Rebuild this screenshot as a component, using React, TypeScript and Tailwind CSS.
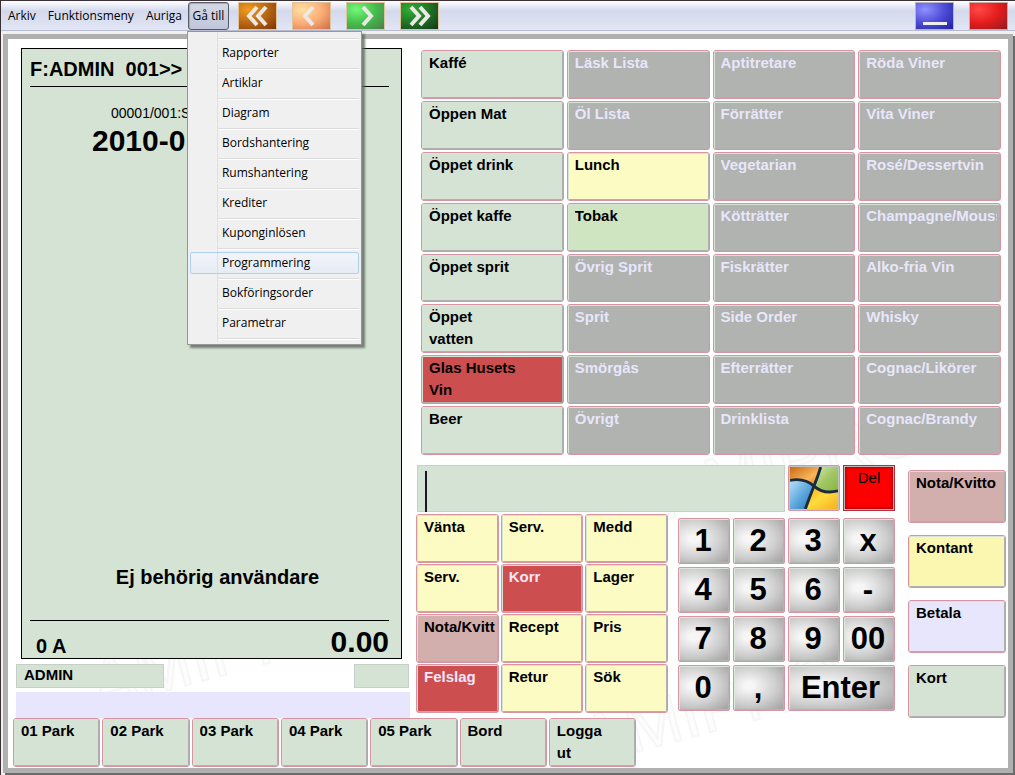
type Tone = "green" | "gray" | "yellow" | "straw" | "lime" | "red" | "redLight" | "rose" | "lavender";

const tones: Record<Tone, string> = {
  green: "bg-[#d5e3d5] text-black",
  gray: "bg-[#b0b3b0] text-[#e8e6fb]",
  yellow: "bg-[#fdfbc4] text-black",
  straw: "bg-[#fbf7b0] text-black",
  lime: "bg-[#cfe5c2] text-black",
  red: "bg-[#cc4e4e] text-black",
  redLight: "bg-[#cc4e4e] text-[#f6e6fb]",
  rose: "bg-[#d2aead] text-black",
  lavender: "bg-[#e8e6fd] text-black",
};

const products: [string, Tone][] = [
  ["Kaffé", "green"], ["Läsk Lista", "gray"], ["Aptitretare", "gray"], ["Röda Viner", "gray"],
  ["Öppen Mat", "green"], ["Öl Lista", "gray"], ["Förrätter", "gray"], ["Vita Viner", "gray"],
  ["Öppet drink", "green"], ["Lunch", "yellow"], ["Vegetarian", "gray"], ["Rosé/Dessertvin", "gray"],
  ["Öppet kaffe", "green"], ["Tobak", "lime"], ["Kötträtter", "gray"], ["Champagne/Mouss", "gray"],
  ["Öppet sprit", "green"], ["Övrig Sprit", "gray"], ["Fiskrätter", "gray"], ["Alko-fria Vin", "gray"],
  ["Öppet\nvatten", "green"], ["Sprit", "gray"], ["Side Order", "gray"], ["Whisky", "gray"],
  ["Glas Husets\nVin", "red"], ["Smörgås", "gray"], ["Efterrätter", "gray"], ["Cognac/Likörer", "gray"],
  ["Beer", "green"], ["Övrigt", "gray"], ["Drinklista", "gray"], ["Cognac/Brandy", "gray"],
];

const functions: [string, Tone][] = [
  ["Vänta", "yellow"], ["Serv.", "yellow"], ["Medd", "yellow"],
  ["Serv.", "yellow"], ["Korr", "redLight"], ["Lager", "yellow"],
  ["Nota/Kvitt", "rose"], ["Recept", "yellow"], ["Pris", "yellow"],
  ["Felslag", "redLight"], ["Retur", "yellow"], ["Sök", "yellow"],
];

const payments: [string, Tone][] = [
  ["Nota/Kvitto", "rose"], ["Kontant", "straw"], ["Betala", "lavender"], ["Kort", "green"],
];

const parking = ["01 Park", "02 Park", "03 Park", "04 Park", "05 Park", "Bord", "Logga\nut"];
const digits = ["1", "2", "3", "x", "4", "5", "6", "-", "7", "8", "9", "00", "0", ","];
const menuItems = [
  "Rapporter", "Artiklar", "Diagram", "Bordshantering", "Rumshantering",
  "Krediter", "Kuponginlösen", "Programmering", "Bokföringsorder", "Parametrar",
];

const watermarks = [
  [90, 670], [580, 726], [660, 480],
];

function Key({ label, tone, className = "" }: { label: string; tone: Tone; className?: string }) {
  return (
    <button
      type="button"
      className={`min-w-0 rounded-[3px] border border-[#d794a2] text-left ${tones[tone]} ${className}`}
    >
      <span className="block h-full rounded-[2px] border border-t-[#d8e2d6] border-r-[#b0b0b0] border-b-[#b0b0b0] border-l-[#d8e2d6] pr-0.5 pl-1.5">
        <span className="block overflow-hidden text-[15px] leading-[22px] font-bold whitespace-pre">{label}</span>
      </span>
    </button>
  );
}

function NumKey({ label, className = "" }: { label: string; className?: string }) {
  return (
    <button
      type="button"
      className={`rounded-[2px] border border-[#d794a2] bg-radial-[at_30%_45%] from-[#f6f6f6] from-10% via-[#cecece] via-55% to-[#9c9c9c] pr-0.5 text-[31px] leading-[42px] font-bold text-black shadow-[inset_1px_1px_0_#dde5dc,inset_-1px_-1px_0_#b4b4b4] ${className}`}
    >
      {label}
    </button>
  );
}

function Chevron({ d }: { d: string }) {
  return (
    <svg viewBox="0 0 37 26" className="h-[26px] w-[37px]" fill="none" stroke="#ebe8e6" strokeWidth="4" aria-hidden="true">
      <path d={d} />
    </svg>
  );
}

function WindowsLogo() {
  return (
    <svg viewBox="0 0 50 44" preserveAspectRatio="none" className="block h-full w-full" aria-hidden="true">
      <defs>
        <linearGradient id="wr" x1="0" y1="0" x2="1" y2="1"><stop offset="0" stopColor="#c96a14" /><stop offset=".6" stopColor="#f9b65a" /><stop offset="1" stopColor="#e0692a" /></linearGradient>
        <linearGradient id="wg" x1="0" y1="0" x2="1" y2="1"><stop offset="0" stopColor="#d5e5b0" /><stop offset=".5" stopColor="#a3c768" /><stop offset="1" stopColor="#86b63e" /></linearGradient>
        <linearGradient id="wb" x1="0" y1="0" x2="1" y2="1"><stop offset="0" stopColor="#b9e1f8" /><stop offset=".5" stopColor="#5fa9de" /><stop offset="1" stopColor="#2470b6" /></linearGradient>
        <linearGradient id="wy" x1="0" y1="0" x2="1" y2="1"><stop offset="0" stopColor="#f3a71e" /><stop offset=".5" stopColor="#fedc3d" /><stop offset="1" stopColor="#f5ae21" /></linearGradient>
      </defs>
      <path d="M0 0H32Q28 10 25 20Q15 11 0 15Z" fill="url(#wr)" />
      <path d="M32 0H50V25Q37 27 25 20Q28 10 32 0Z" fill="url(#wg)" />
      <path d="M0 15Q15 11 25 20Q20 31 16 44H0Z" fill="url(#wb)" />
      <path d="M25 20Q37 27 50 25V44H16Q20 31 25 20Z" fill="url(#wy)" />
      <path d="M0 14Q15 11 25 20T50 25M32 0Q29 10 25 20T16 44" fill="none" stroke="#192b3d" strokeWidth="3" />
    </svg>
  );
}

export default function App() {
  const navButton = "flex h-7 w-[39px] items-center justify-center border border-[#e0c49c]";
  return (
    <div className="flex min-h-screen flex-col border-t border-l border-[#3a3036] bg-[#f0f0f0] font-['Liberation_Sans',Arial,sans-serif] text-black">
      <header className="flex h-[30px] items-center border-b border-[#b7bbd0] bg-linear-to-b from-white from-0% via-[#d3d9ec] via-35% to-[#e2e6f5] pl-0.5 font-['Open_Sans','Segoe_UI',sans-serif] text-[12px]">
        <nav className="flex items-center">
          <button type="button" className="px-[5px]">Arkiv</button>
          <button type="button" className="px-[7px]">Funktionsmeny</button>
          <button type="button" className="px-[5px]">Auriga</button>
          <div className="relative ml-px">
            <button type="button" aria-expanded="true" className="h-7 w-[41px] rounded-[3px] border border-[#565a66] bg-linear-to-b from-[#d6d9e4] to-[#c0c6da] whitespace-nowrap shadow-[inset_1px_1px_1px_#a5a9b5]">
              Gå till
            </button>
            <div role="menu" className="absolute top-[29px] -left-px z-10 w-[175px] border border-[#979797] bg-[#f0f0f0] px-0.5 pb-0.5 shadow-[3px_3px_2px_#5e665ecc]">
              <div className="ml-[27px] h-[6px] border-l border-[#e0e0e0]" />
              {menuItems.map((item) => (
                <div key={item} className="h-[30px]">
                  <div className="ml-[27px] h-1 border-l border-[#e0e0e0]">
                    <div className="h-0.5 border-t border-t-[#dcdcdc] border-b border-b-white" />
                  </div>
                  <button
                    type="button"
                    role="menuitem"
                    className={`flex h-[22px] w-full items-center rounded-[2px] border text-left ${item === "Programmering" ? "border-[#aecff7] bg-linear-to-b from-[#f2f4f8] to-[#e6ecf5]" : "border-transparent"}`}
                  >
                    <span className="ml-[26px] flex h-full items-center border-l border-[#e0e0e0] pl-[4px]">{item}</span>
                  </button>
                  <div className="ml-[27px] h-1 border-l border-[#e0e0e0]" />
                </div>
              ))}
              <div className="ml-[27px] h-1 border-l border-[#e0e0e0]">
                <div className="h-0.5 border-t border-t-[#dcdcdc] border-b border-b-white" />
              </div>
            </div>
          </div>
        </nav>
        <div className="ml-[9px] flex gap-[15px]">
          <button type="button" aria-label="Första" className={`${navButton} bg-radial-[at_25%_25%] from-[#f39a1c] to-[#7d340a]`}>
            <Chevron d="M18 4L10 13L18 22M27 4L19 13L27 22" />
          </button>
          <button type="button" aria-label="Föregående" className={`${navButton} bg-radial-[at_25%_25%] from-[#ffe0a0] via-[#fcae78] to-[#cb6f48]`}>
            <Chevron d="M20 4L12 13L20 22" />
          </button>
          <button type="button" aria-label="Nästa" className={`${navButton} bg-radial-[at_25%_25%] from-[#72f878] via-[#45bd4b] to-[#4b7d4f]`}>
            <Chevron d="M16 4L24 13L16 22" />
          </button>
          <button type="button" aria-label="Sista" className={`${navButton} bg-radial-[at_25%_25%] from-[#2fae34] to-[#123718]`}>
            <Chevron d="M10 4L18 13L10 22M19 4L27 13L19 22" />
          </button>
        </div>
        <div className="mr-[7px] ml-auto flex gap-[15px]">
          <button type="button" aria-label="Minimera" className="flex h-7 w-[39px] items-end justify-center border border-[#b9b3c6] bg-radial-[at_25%_25%] from-[#9191ff] via-[#4c4cd5] to-[#2020a0] pb-1">
            <span className="h-[3px] w-6 bg-[#eeeef2]" />
          </button>
          <button type="button" aria-label="Stäng" className="h-7 w-[39px] border border-[#c9aaa0] bg-radial-[at_25%_25%] from-[#ff4848] via-[#e51c1c] to-[#8e1c20]" />
        </div>
      </header>

      <main className="relative mx-0.5 mt-[3px] mb-0.5 flex flex-1 flex-col border-5 border-[#b0b0b0] bg-white pr-0.5 pl-px shadow-[2px_2px_0_#6b6b6b]">
        <svg className="pointer-events-none absolute inset-0 h-full w-full" aria-hidden="true">
          <g fill="#fdfdfd" stroke="#f6f6f6" strokeWidth="2" fontFamily="Liberation Sans" fontSize="68">
            {watermarks.map(([x, y]) => (
              <text key={`${x}-${y}`} x={x} y={y} transform={`rotate(-15 ${x} ${y})`}>AMIPRO</text>
            ))}
          </g>
        </svg>
        <div className="relative grid grid-cols-[minmax(0,397fr)_minmax(0,590fr)] gap-x-1.5 pl-1">
          <section className="flex flex-col pt-[9px]">
            <div className="mr-2 ml-2 flex h-[611px] flex-col border border-black bg-[#d5e3d5] px-2">
              <div className="mr-1 h-[38px] border-b border-black pt-2 text-[20px] leading-6 font-bold whitespace-pre">F:ADMIN  001&gt;&gt;</div>
              <div className="pt-4">
                <p className="pl-[81px] text-[14px] leading-5 whitespace-nowrap">00001/001:S</p>
                <p className="pl-[62px] text-[30px] leading-9 font-bold whitespace-nowrap">2010-0</p>
              </div>
              <p className="mt-auto mb-[31px] pl-3 text-center text-[20px] leading-6 font-bold">Ej behörig användare</p>
              <div className="mr-1 flex h-[38px] items-end justify-between border-t border-black pl-1.5 font-bold">
                <span className="text-[20px] leading-6">0 A</span>
                <span className="text-[30px] leading-8">0.00</span>
              </div>
            </div>
            <div className="mt-[5px] mr-px ml-[3px] flex justify-between">
              <div className="h-6 w-[148px] border border-[#c8cec8] bg-[#d5e3d5] pl-[7px] text-[15px] leading-5 font-bold">ADMIN</div>
              <div className="h-6 w-[55px] border border-[#c8cec8] bg-[#d5e3d5]" />
            </div>
            <div className="mt-1 ml-[3px] h-[26px] bg-[#e8e6fd]" />
          </section>

          <section className="flex flex-col pt-[11px]">
            <div className="mx-[5px] grid h-[405px] grid-cols-4 grid-rows-8 gap-x-[3px] gap-y-0.5">
              {products.map(([label, tone]) => <Key key={label} label={label} tone={tone} />)}
            </div>
            <div className="mt-2.5 flex justify-between">
              <div className="min-w-0 flex-1">
                <div className="ml-px flex h-[47px] gap-[3px]">
                  <div className="relative min-w-0 flex-1">
                    <input aria-label="Inmatning" className="h-full w-full border border-[#c8cec8] bg-[#d5e3d5] px-2 text-[31px] outline-none" />
                    <span className="absolute bottom-0 left-2 h-[41px] w-0.5 bg-[#1c1626]" />
                  </div>
                  <button type="button" aria-label="Windows" className="h-[46px] w-[52px] rounded-[2px] border border-[#d794a2] bg-[#c4c4c4] p-px"><WindowsLogo /></button>
                  <button type="button" className="flex h-[46px] w-[52px] justify-center border border-[#b03040] bg-[#f00] pt-0.5 text-[15px] leading-5 shadow-[inset_0_0_0_1px_#c8b4b4,inset_0_0_3px_2px_#b00000]">Del</button>
                </div>
                <div className="flex gap-2.5 pt-0.5">
                  <div className="grid min-w-0 flex-[252] auto-rows-[49px] grid-cols-3 gap-x-0.5 gap-y-px">
                    {functions.map(([label, tone], i) => <Key key={i} label={label} tone={tone} />)}
                  </div>
                  <div className="mt-1 grid min-w-0 flex-[217] auto-rows-[46px] grid-cols-4 gap-[3px]">
                    {digits.map((d) => <NumKey key={d} label={d} />)}
                    <NumKey label="Enter" className="col-span-2" />
                  </div>
                </div>
              </div>
              <div className="mt-[5px] ml-[13px] flex w-[98px] flex-col gap-3">
                {payments.map(([label, tone]) => <Key key={label} label={label} tone={tone} className="h-[53px]" />)}
              </div>
            </div>
          </section>
        </div>
        <div className="relative mb-px ml-1 grid w-5/8 grid-cols-7 gap-0.5">
          {parking.map((label) => <Key key={label} label={label} tone="green" className="h-[49px]" />)}
        </div>
      </main>
    </div>
  );
}
